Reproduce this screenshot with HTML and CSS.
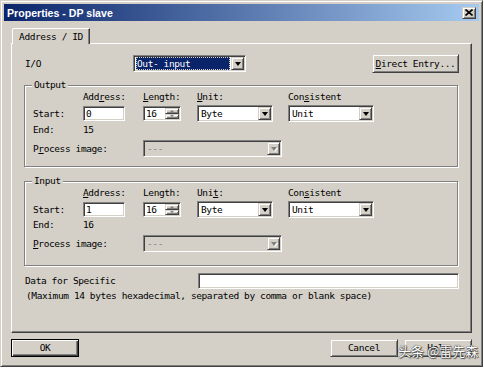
FILE: index.html
```html
<!DOCTYPE html>
<html>
<head>
    <title>Properties - DP slave</title>
    <link rel="stylesheet" href="styles.css">
</head>
<body>
    <div class="window">
        <div class="title-bar">
            <span class="title">Properties - DP slave</span>
            <span class="close-btn">
                <svg width="8" height="7" viewBox="0 0 8 7"><path d="M0.5 0.5 L7.5 6.5 M7.5 0.5 L0.5 6.5" stroke="#000" stroke-width="1.6"/></svg>
            </span>
        </div>
        <div class="content">
            <div class="tabs"><div class="tab">Address / ID</div></div>
            <div class="panel">
                <div class="io-row">
                    <span class="io-label">I/O</span>
                    <div class="select io-select">
                        <span class="sel-text"><span class="highlight">Out- input</span></span>
                        <span class="drop"></span>
                    </div>
                    <span class="btn direct"><u>D</u>irect Entry...</span>
                </div>

                <div class="group">
                    <span class="legend">Output</span>
                    <div class="grid">
                        <span></span>
                        <span>Add<u>r</u>ess:</span>
                        <span><u>L</u>ength:</span>
                        <span><u>U</u>nit:</span>
                        <span>Con<u>s</u>istent</span>

                        <span>Start:</span>
                        <div class="field addr">0</div>
                        <div class="spin">
                            <span class="spin-val">16</span>
                            <span class="spin-btns"><span class="spin-btn up"></span><span class="spin-btn down"></span></span>
                        </div>
                        <div class="select unit"><span class="sel-text">Byte</span><span class="drop"></span></div>
                        <div class="select cons"><span class="sel-text">Unit</span><span class="drop"></span></div>

                        <span>End:</span>
                        <span>15</span>

                        <span class="proc-label">P<u>r</u>ocess image:</span>
                        <div class="select proc disabled"><span class="sel-text">---</span><span class="drop"></span></div>
                    </div>
                </div>

                <div class="group group-input">
                    <span class="legend">Input</span>
                    <div class="grid">
                        <span></span>
                        <span><u>A</u>ddress:</span>
                        <span>Length:</span>
                        <span>Uni<u>t</u>:</span>
                        <span>Con<u>s</u>istent</span>

                        <span>Start:</span>
                        <div class="field addr">1</div>
                        <div class="spin">
                            <span class="spin-val">16</span>
                            <span class="spin-btns"><span class="spin-btn up"></span><span class="spin-btn down"></span></span>
                        </div>
                        <div class="select unit"><span class="sel-text">Byte</span><span class="drop"></span></div>
                        <div class="select cons"><span class="sel-text">Unit</span><span class="drop"></span></div>

                        <span>End:</span>
                        <span>16</span>

                        <span class="proc-label"><u>P</u>rocess image:</span>
                        <div class="select proc disabled"><span class="sel-text">---</span><span class="drop"></span></div>
                    </div>
                </div>

                <div class="data-row">
                    <span class="data-label">Data for Specific</span>
                    <div class="field data"></div>
                </div>
                <p class="note">(Maximum 14 bytes hexadecimal, separated by comma or blank space)</p>
            </div>

            <div class="buttons">
                <span class="btn btn-default">OK</span>
                <span class="right-btns">
                    <span class="btn">Cancel</span>
                    <span class="btn">Help</span>
                </span>
            </div>
        </div>
        <span class="watermark">头条 @雷先森</span>
    </div>
</body>
</html>
```

FILE: styles.css
```css
*, *::before, *::after { margin: 0; padding: 0; box-sizing: border-box; }
body { width: 484px; height: 368px; overflow: hidden; background: #fff; color: #000; font-family: "DejaVu Sans Mono", "Liberation Mono", monospace; font-size: 9.5px; letter-spacing: -0.4px; line-height: 12px; }
u { text-decoration: underline; text-underline-offset: 1px; }

.window { position: relative; width: 483px; height: 367px; padding: 3px; display: flex; flex-direction: column; background: #d4d0c8; border: 1px solid; border-color: #d4d0c8 #404040 #404040 #d4d0c8; box-shadow: inset 1px 1px #fff, inset -1px -1px #808080; }

/* title bar */
.title-bar { flex: none; height: 17px; padding: 0 3px 0 3px; display: flex; align-items: center; justify-content: space-between; background: linear-gradient(to right, #0a246a, #a6caf0); }
.title { color: #fff; font: bold 10.6px "Liberation Sans", Arial, sans-serif; letter-spacing: 0; }
.close-btn { width: 14px; height: 12px; display: flex; align-items: center; justify-content: center; }

/* raised 3d look */
.close-btn, .btn, .drop, .spin-btn { background: #d4d0c8; border: 1px solid; border-color: #d4d0c8 #404040 #404040 #d4d0c8; box-shadow: inset 1px 1px #fff, inset -1px -1px #808080; }

/* sunken 3d look */
.field, .select, .spin { background: #fff; border: 1px solid; border-color: #808080 #fff #fff #808080; box-shadow: inset 1px 1px #404040, inset -1px -1px #d4d0c8; padding: 1px; }

.content { flex: 1; padding: 7px 7px 0 7px; display: flex; flex-direction: column; }

/* tab */
.tabs { display: flex; height: 16px; margin-bottom: -1px; position: relative; z-index: 1; }
.tab { margin-left: 1px; width: 78px; height: 16px; padding-top: 2px; text-align: center; background: #d4d0c8; border-top: 1px solid #fff; border-left: 1px solid #fff; border-right: 1px solid #404040; border-top-left-radius: 2px; box-shadow: inset -1px 0 #808080; }

.panel { flex: none; height: 290px; padding: 10px 12px 0 12px; border: 1px solid; border-color: #fff #404040 #404040 #fff; box-shadow: inset -1px -1px #808080; }

/* I/O row */
.io-row { display: flex; align-items: center; height: 19px; }
.io-label { width: 109px; padding-left: 1px; }
.select { display: flex; height: 17px; }
.sel-text { flex: 1; padding-left: 2px; line-height: 13px; white-space: nowrap; overflow: hidden; }
.drop { flex: none; width: 13px; display: flex; align-items: center; justify-content: center; }
.drop::after { content: ""; width: 0; height: 0; margin-top: 1px; border-top: 4px solid #000; border-left: 3.5px solid transparent; border-right: 3.5px solid transparent; }
.io-select { width: 113px; }
.io-select .sel-text { padding: 0 1px 0 1px; }
.highlight { display: block; height: 13px; padding-left: 1px; background: #0a246a; color: #fff; outline: 1px dotted #d4d0c8; outline-offset: -1px; }
.btn { display: flex; align-items: center; justify-content: center; }
.direct { margin-left: auto; width: 87px; height: 19px; }

/* group boxes */
.group { margin-top: 12px; padding: 0 0 5px 8px; border: 1px solid #808080; width: 434px; box-shadow: 1px 1px #fff, inset 1px 1px #fff; }
.group-input { margin-top: 14px; padding-bottom: 8px; }
.legend { display: block; width: fit-content; margin: -7px 0 0 -1px; padding: 0 2px; background: #d4d0c8; }
.grid { display: grid; grid-template-columns: 50px 60px 54px 91px 1fr; grid-template-rows: 12px 21px 12px 25px; align-items: center; }
.group-input .grid { grid-template-rows: 12px 21px 10px 27px; }
.field { height: 15px; line-height: 11px; padding-left: 2px; }
.addr { width: 42px; }
.spin { width: 38px; height: 15px; display: flex; }
.spin-val { flex: 1; padding-left: 1px; line-height: 11px; }
.spin-btns { width: 14px; display: flex; flex-direction: column; }
.spin-btn { flex: 1; display: flex; align-items: center; justify-content: center; }
.spin-btn::after { content: ""; width: 0; height: 0; border-left: 2px solid transparent; border-right: 2px solid transparent; }
.up::after { border-bottom: 2px solid #808080; }
.down::after { border-top: 2px solid #808080; }
.unit { width: 76px; }
.cons { width: 86px; }
.proc-label { grid-column: 1 / 3; }
.proc { grid-column: 3 / 6; width: 139px; }
.disabled { background: #d4d0c8; color: #808080; }
.disabled .drop::after { border-top-color: #808080; filter: drop-shadow(1px 1px 0 #fff); }

/* data for specific */
.data-row { display: flex; align-items: center; height: 17px; margin-top: 6px; }
.data-label { width: 174px; padding-left: 1px; }
.data { width: 261px; height: 16px; }
.note { margin-top: 1px; padding-left: 2px; white-space: nowrap; }

/* bottom buttons */
.buttons { display: flex; justify-content: space-between; margin-top: 6px; }
.buttons .btn { width: 68px; height: 18px; }
.right-btns { display: flex; gap: 6px; }
.btn-default { border-color: #000; box-shadow: inset 1px 1px #fff, inset -1px -1px #404040, inset -2px -2px #808080; }

.watermark { position: absolute; left: 397px; top: 340px; font: 13px "Noto Sans CJK SC", sans-serif; letter-spacing: 0; color: #fff; text-shadow: 0 0 1px #333, 0 0 1px #333, 1px 1px 1px #555; }
```
